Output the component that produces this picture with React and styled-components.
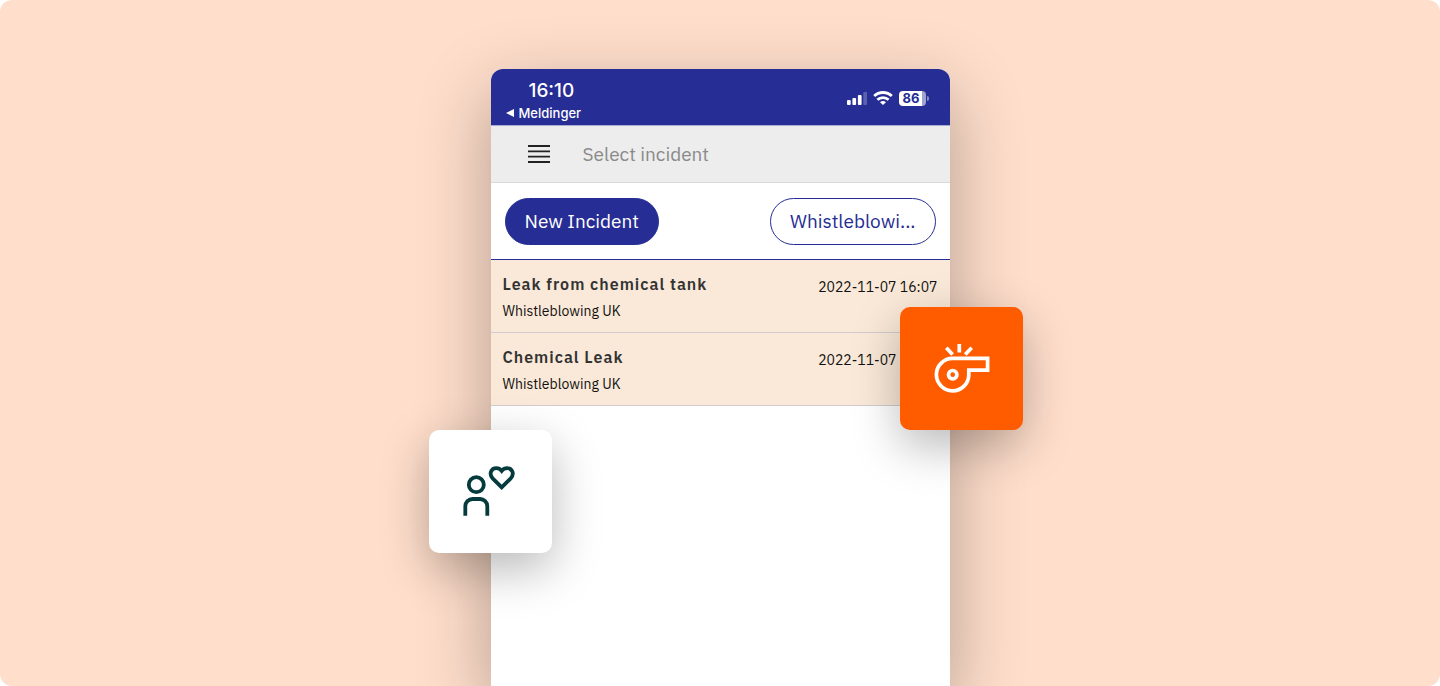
import React from "react";
import styled, { createGlobalStyle } from "styled-components";

const blue = "#262d94";
const plex = '"IBM Plex Sans", "Noto Sans", "Open Sans", sans-serif';

const GlobalStyle = createGlobalStyle`
  *, *::before, *::after { box-sizing: border-box; }
  body { margin: 0; background: #fff; font-family: ${plex}; }
  h1, h2, p, ul { margin: 0; padding: 0; }
  button { font-family: inherit; cursor: pointer; }
`;

const Hero = styled.main`
  display: flex;
  justify-content: center;
  min-height: 100vh;
  padding-top: 69px;
  overflow: hidden;
  border-radius: 12px;
  background: #ffdecb;
`;

const Phone = styled.div`
  position: relative;
  display: flex;
  flex-direction: column;
  width: 100%;
  max-width: 459px;
  border-radius: 12px 12px 0 0;
  background: #fff;
  box-shadow: 0 24px 72px rgba(0, 0, 0, 0.3);
`;

const StatusBar = styled.div`
  display: flex;
  justify-content: space-between;
  height: 57px;
  padding: 10px 22px 0 15px;
  border-bottom: 1px solid #a9acd2;
  border-radius: 12px 12px 0 0;
  background: ${blue};
  color: #fff;
  font-family: Inter, sans-serif;
`;

const Clock = styled.p`
  padding-left: 23px;
  font-size: 19px;
  font-weight: 500;
  line-height: 24px;
`;

const BackLink = styled.a`
  display: flex;
  align-items: center;
  gap: 5px;
  color: inherit;
  font-size: 13px;
  font-weight: 500;
  line-height: 20px;
  text-decoration: none;
`;

const StatusIcons = styled.div`
  display: flex;
  align-items: center;
  height: 38px;
  gap: 6px;
`;

const Battery = styled.span`
  position: relative;
  display: block;
  width: 27px;
  height: 15px;
  border-radius: 4px;
  background: linear-gradient(to right, #fff 86%, #a0a3d0 86%);
  color: ${blue};
  font-size: 13px;
  font-weight: 700;
  line-height: 15px;
  padding-left: 4px;
  margin-right: 2px;

  &::after {
    content: "";
    position: absolute;
    top: 5px;
    right: -3px;
    width: 2px;
    height: 5px;
    border-radius: 0 2px 2px 0;
    background: #8a8dc6;
  }
`;

const TitleBar = styled.header`
  display: flex;
  align-items: center;
  gap: 33px;
  height: 57px;
  padding: 0 37px;
  border-bottom: 1px solid #d9d9d9;
  background: #ededed;
`;

const MenuButton = styled.button`
  display: block;
  padding: 0;
  border: 0;
  background: none;
  svg { display: block; }
`;

const Title = styled.h1`
  color: #8a8a8a;
  font-size: 19px;
  font-weight: 400;
  line-height: 24px;
`;

const Actions = styled.div`
  display: flex;
  align-items: center;
  justify-content: space-between;
  height: 77px;
  padding: 0 14px;
  border-bottom: 1px solid ${blue};
`;

const Pill = styled.button`
  height: 47px;
  padding: 0 19px;
  border: 1px solid ${blue};
  border-radius: 24px;
  background: ${(p) => (p.$filled ? blue : "#fff")};
  color: ${(p) => (p.$filled ? "#fff" : blue)};
  font-size: 19px;
  line-height: 24px;
`;

const IncidentList = styled.ul`
  list-style: none;
`;

const Incident = styled.li`
  display: flex;
  align-items: flex-start;
  justify-content: space-between;
  height: 73px;
  padding: 12px 12px 0;
  border-bottom: 1px solid #cfcdd0;
  background: #fae9d8;
`;

const IncidentTitle = styled.h2`
  color: #333;
  font-size: 16px;
  font-weight: 600;
  letter-spacing: 1px;
  line-height: 24px;
`;

const Department = styled.p`
  padding-top: 5px;
  color: #111;
  font-size: 14px;
  line-height: 20px;
`;

const Stamp = styled.time`
  padding-top: 5px;
  color: #111;
  font-size: 14px;
  line-height: 20px;
`;

const Tile = styled.div`
  position: absolute;
  width: 123px;
  height: 123px;
  border-radius: 10px;
  box-shadow: 0 16px 48px rgba(0, 0, 0, 0.28);
  svg { display: block; }
`;

const WhistleTile = styled(Tile)`
  top: 238px;
  right: -73px;
  background: #ff5c00;
`;

const CareTile = styled(Tile)`
  top: 361px;
  left: -62px;
  background: #fff;
`;

const incidents = [
  { title: "Leak from chemical tank", department: "Whistleblowing UK", time: "2022-11-07 16:07" },
  { title: "Chemical Leak", department: "Whistleblowing UK", time: "2022-11-07 16:07" },
];

const SignalIcon = () => (
  <svg width="20" height="14" viewBox="0 0 20 14" fill="#fff" aria-hidden="true">
    <rect x="0" y="9" width="3.7" height="5" rx="1" />
    <rect x="5.4" y="7" width="3.7" height="7" rx="1" />
    <rect x="10.9" y="4" width="3.7" height="10" rx="1" />
    <rect x="16.3" y="1" width="3.7" height="13" rx="1" opacity="0.25" />
  </svg>
);

const WifiIcon = () => (
  <svg width="20" height="14" viewBox="0 0 20 14" fill="none" stroke="#fff" strokeWidth="2.8" aria-hidden="true">
    <path d="M1.2 5.1C6 0.3 14 0.3 18.8 5.1" />
    <path d="M4.4 8.8C7.5 5.8 12.5 5.8 15.6 8.8" />
    <path d="M10 14 7 11.2C8.7 9.6 11.3 9.6 13 11.2Z" fill="#fff" stroke="none" />
  </svg>
);

const MenuIcon = () => (
  <svg width="22" height="18" viewBox="0 0 22 18" stroke="#222" strokeWidth="1.8" aria-hidden="true">
    <path d="M0 1H22M0 6.3H22M0 11.7H22M0 17H22" />
  </svg>
);

const WhistleIcon = () => (
  <svg width="123" height="123" viewBox="0 0 123 123" fill="none" stroke="#fff" strokeWidth="3.7" aria-hidden="true">
    <path d="M52.7 51.4H87.6V63.2H68.8V67.7A16.2 16.2 0 1 1 52.7 51.4Z" />
    <circle cx="52.7" cy="67.7" r="4.2" />
    <path d="M59.3 37V45.4M46.3 40.7 52.6 47.6M71.7 40.7 65.2 47.6" />
  </svg>
);

const CareIcon = () => (
  <svg width="123" height="123" viewBox="0 0 123 123" fill="none" stroke="#053b3c" strokeWidth="3.8" aria-hidden="true">
    <circle cx="47.3" cy="54.7" r="7.5" />
    <path d="M36.3 85.7V76.2A7.2 7.2 0 0 1 43.5 69H51.1A7.2 7.2 0 0 1 58.3 76.2V85.7" />
    <path d="M72.7 57.4 63.9 48.6C59.2 43.6 62.6 38.2 67.3 38.2C69.6 38.2 71.4 39.2 72.7 40.9C74 39.2 75.8 38.2 78.1 38.2C82.8 38.2 86.2 43.6 81.5 48.6Z" />
  </svg>
);

export default function App() {
  return (
    <>
      <GlobalStyle />
      <Hero>
        <Phone>
          <StatusBar>
            <div>
              <Clock>16:10</Clock>
              <BackLink href="#meldinger">
                <svg width="8" height="8" viewBox="0 0 8 8" fill="#fff" aria-hidden="true">
                  <path d="M0 4 8 0V8Z" />
                </svg>
                Meldinger
              </BackLink>
            </div>
            <StatusIcons>
              <SignalIcon />
              <WifiIcon />
              <Battery>86</Battery>
            </StatusIcons>
          </StatusBar>
          <TitleBar>
            <MenuButton type="button" aria-label="Menu">
              <MenuIcon />
            </MenuButton>
            <Title>Select incident</Title>
          </TitleBar>
          <Actions>
            <Pill type="button" $filled>New Incident</Pill>
            <Pill type="button">Whistleblowi...</Pill>
          </Actions>
          <IncidentList>
            {incidents.map((item) => (
              <Incident key={item.title}>
                <div>
                  <IncidentTitle>{item.title}</IncidentTitle>
                  <Department>{item.department}</Department>
                </div>
                <Stamp>{item.time}</Stamp>
              </Incident>
            ))}
          </IncidentList>
          <WhistleTile>
            <WhistleIcon />
          </WhistleTile>
          <CareTile>
            <CareIcon />
          </CareTile>
        </Phone>
      </Hero>
    </>
  );
}
